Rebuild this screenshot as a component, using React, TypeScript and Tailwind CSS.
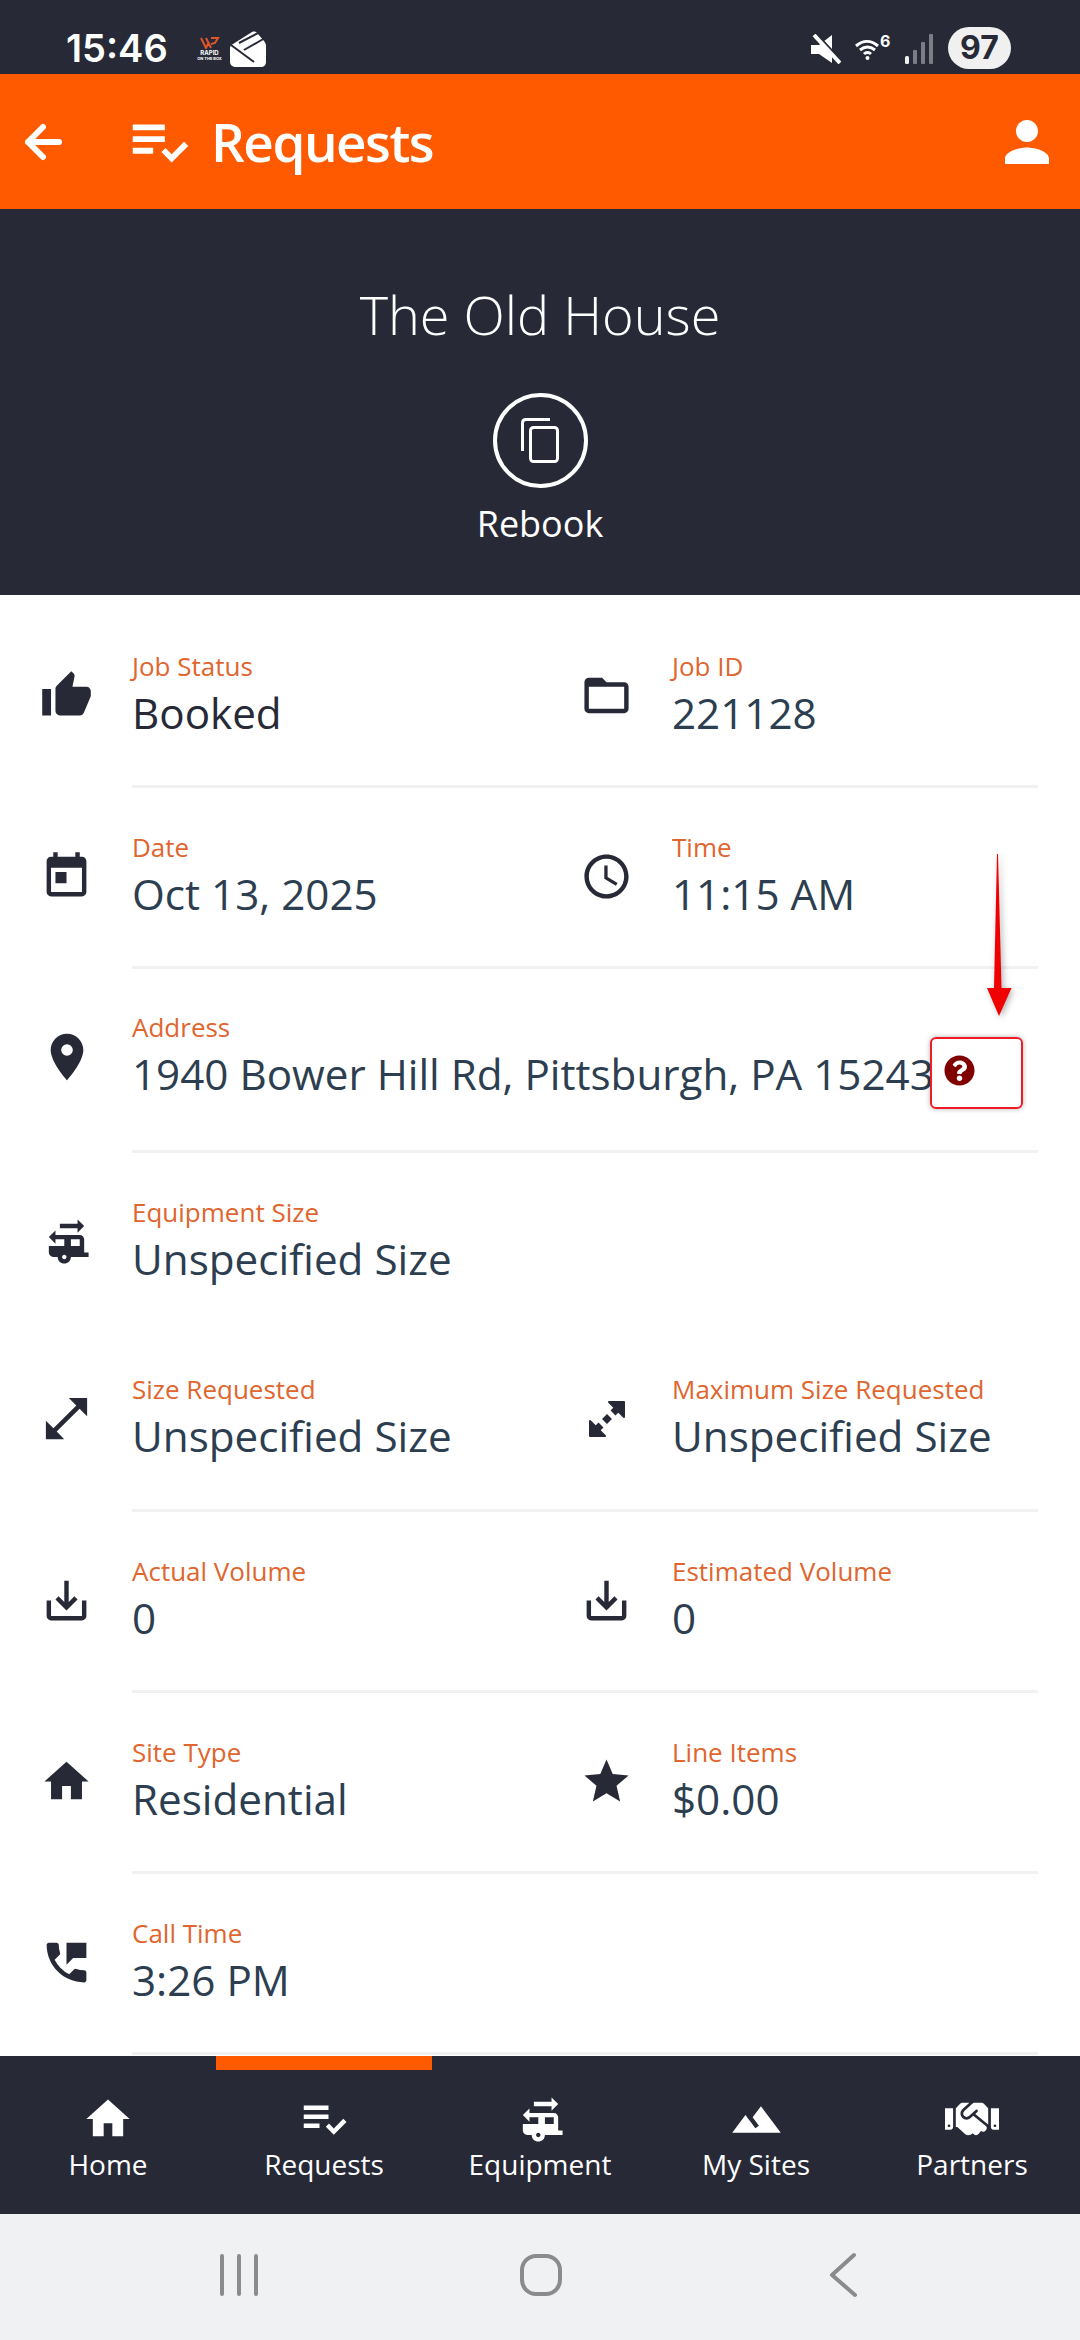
import type { ReactNode } from "react";
import { FaHandshake, FaQuestionCircle } from "react-icons/fa";
import {
  MdAccessTime,
  MdFolderOpen,
  MdHome,
  MdOpenInFull,
  MdPermPhoneMsg,
  MdPerson,
  MdPlace,
  MdPlaylistAddCheck,
  MdRvHookup,
  MdSaveAlt,
  MdStar,
  MdTerrain,
  MdThumbUp,
  MdToday,
} from "react-icons/md";

function MaxSizeIcon() {
  return (
    <svg width="38" height="38" viewBox="0 0 38 38" fill="#272937" stroke="#272937">
      <path d="M21 2h15v15z" strokeWidth="2" strokeLinejoin="round" />
      <path d="M17 36H2V21z" strokeWidth="2" strokeLinejoin="round" />
      <path d="M31 7l-6 6M21.500 16.500l-5 5M13 25l-6 6" strokeWidth="7" />
    </svg>
  );
}

function Field({ icon, label, value, dark }: { icon: ReactNode; label: string; value: ReactNode; dark?: boolean }) {
  return (
    <div className="flex items-center">
      <div className="w-[132px] pl-[1px] flex justify-center text-[#272937]">{icon}</div>
      <div>
        <div className="text-[26px] leading-[34px] mb-[2px] text-[#e0652e]">{label}</div>
        <div className={`text-[42.200px] leading-[56px] pb-[1px] whitespace-nowrap ${dark ? "text-[#272937]" : "text-[#2c3e50]"}`}>
          {value}
        </div>
      </div>
    </div>
  );
}

function Sep() {
  return <div className="h-[3px] ml-[132px] mr-[42px] bg-[#f1f1f1]" />;
}

function StatusBar() {
  return (
    <div className="h-[74px] bg-[#272937] flex items-center shrink-0 pl-[66px] pr-[69px] text-white">
      <span className="font-['Inter',sans-serif] font-semibold text-[38px] leading-none mt-[21px] w-[123px]">15:46</span>
      <div className="w-[41px] mt-[24px] flex flex-col items-center">
        <svg width="20" height="12" viewBox="0 0 20 12" fill="none" stroke="#e0562a" strokeWidth="2">
          <path d="M1 1l5 10 3-6M6 1l5 10M11 1h7l-3 5-4 1" />
        </svg>
        <span className="font-['Inter',sans-serif] font-bold text-[6px] leading-[7px]">RAPID</span>
        <span className="font-['Inter',sans-serif] font-bold text-[4px] leading-[5px] whitespace-nowrap">ON THE BOX</span>
      </div>
      <svg className="mt-[24px]" width="36" height="36" viewBox="0 0 36 36">
        <path d="M3 13L22 1c3-1 5 0 6 2l6 7c1 1 2 3 2 5v16c0 3-2 5-5 5H6c-3 0-6-2-6-5V17c0-2 1-3 3-4z" fill="white" />
        <path d="M9 12L28 2M14 19L35 7M1 14l23 17" fill="none" stroke="#272937" strokeWidth="2" />
      </svg>
      <div className="flex-1" />
      <svg className="mt-[24px]" width="30" height="30" viewBox="0 0 30 30" fill="white">
        <path d="M0 11h8L21 1v28L8 20H0z" />
        <path d="M6 1l26 28" stroke="#272937" strokeWidth="3" fill="none" />
        <path d="M3 1l26 28" stroke="white" strokeWidth="4" fill="none" />
      </svg>
      <svg className="ml-[14px] mt-[20px] overflow-visible" width="36" height="26" viewBox="0 0 36 26" fill="none" stroke="white" strokeWidth="3">
        <path d="M1 12c7-6 15-6 22 0M5 16c5-4 10-4 15 0M9 20c2-2 5-2 7 0" />
        <circle cx="12.500" cy="24" r="2" fill="white" stroke="none" />
        <text x="25" y="13" fontSize="16" fontWeight="700" fill="white" stroke="none" fontFamily="Inter, sans-serif">6</text>
      </svg>
      <svg className="ml-[14px] mt-[24px]" width="28" height="30" viewBox="0 0 28 30">
        <rect x="0" y="22" width="4" height="8" rx="1.500" fill="#f0f0f0" />
        <rect x="8" y="16" width="4" height="14" rx="1" fill="#7c7d87" />
        <rect x="16" y="8" width="4" height="22" rx="1" fill="#7c7d87" />
        <rect x="24" y="0" width="4" height="30" rx="1" fill="#7c7d87" />
      </svg>
      <div className="ml-[15px] mt-[22px] w-[63px] h-[42px] rounded-full bg-[#f0f0f0] text-[#272937] font-['Inter',sans-serif] font-bold text-[32px] flex items-center justify-center">
        97
      </div>
    </div>
  );
}

function TabItem({ icon, label, active }: { icon: ReactNode; label: string; active?: boolean }) {
  return (
    <div className="relative flex flex-col items-center pt-[36px]">
      {active && <div className="absolute top-0 inset-x-0 h-[14px] bg-[#ff5a00]" />}
      <div className="h-[54px] flex items-center justify-center">{icon}</div>
      <div className="text-[28px] leading-[36px]">{label}</div>
    </div>
  );
}

export default function App() {
  return (
    <div className="relative w-[1080px] h-[2340px] overflow-hidden flex flex-col bg-white font-['Open_Sans',sans-serif]">
      <StatusBar />

      {/* Orange app bar */}
      <header className="h-[135px] bg-[#ff5a00] shrink-0 flex items-center text-white">
        <div className="w-[132px] pl-[24px]">
          <svg width="38" height="38" viewBox="0 0 38 38" fill="none" stroke="white" strokeWidth="6" strokeLinecap="round" strokeLinejoin="round">
            <path d="M35 19H4M19 4L4 19l15 15" />
          </svg>
        </div>
        <MdPlaylistAddCheck size={70} className="-ml-[8px]" />
        <h1 className="text-[53px] font-semibold tracking-[-1.500px] ml-[17px]">Requests</h1>
        <div className="flex-1" />
        <MdPerson size={66} className="mr-[20px]" />
      </header>

      {/* Job title block */}
      <section className="h-[386px] bg-[#272937] shrink-0 flex flex-col items-center text-white">
        <h2 className="text-[54px] font-light leading-[68px] mt-[71px]">The Old House</h2>
        <div className="w-[95px] h-[95px] mt-[45px] rounded-full border-[4px] border-white flex items-center justify-center">
          <svg width="38" height="45" viewBox="0 0 38 45" fill="none" stroke="white" strokeWidth="3">
            <path d="M1.500 33V5c0-2 1-3.500 3.500-3.500h24" />
            <rect x="9.500" y="9.500" width="27" height="34" rx="3" />
          </svg>
        </div>
        <div className="text-[36px] leading-[48px] mt-[12px]">Rebook</div>
      </section>

      {/* Details */}
      <main className="flex-1 overflow-hidden">
        <div className="grid grid-cols-2 pt-[54px] pb-[43px]">
          <Field icon={<MdThumbUp size={53} />} label="Job Status" value="Booked" dark />
          <Field icon={<MdFolderOpen size={53} />} label="Job ID" value="221128" />
        </div>
        <Sep />
        <div className="grid grid-cols-2 pt-[42px] pb-[43px]">
          <Field icon={<MdToday size={53} />} label="Date" value="Oct 13, 2025" />
          <Field icon={<MdAccessTime size={53} />} label="Time" value="11:15 AM" />
        </div>
        <Sep />
        <div className="pt-[41px] pb-[47px]">
          <Field
            icon={<MdPlace size={56} />}
            label="Address"
            value={
              <span className="flex items-center">
                1940 Bower Hill Rd, Pittsburgh, PA 15243
                <FaQuestionCircle size={31} className="ml-[10px] -mt-[8px] text-[#800000]" />
              </span>
            }
          />
        </div>
        <Sep />
        <div className="pt-[42px] pb-[42px]">
          <Field icon={<MdRvHookup size={53} />} label="Equipment Size" value="Unspecified Size" />
        </div>
        <div className="grid grid-cols-2 pt-[42px] pb-[44px]">
          <Field icon={<MdOpenInFull size={55} />} label="Size Requested" value="Unspecified Size" />
          <Field icon={<MaxSizeIcon />} label="Maximum Size Requested" value="Unspecified Size" />
        </div>
        <Sep />
        <div className="grid grid-cols-2 pt-[42px] pb-[43px]">
          <Field icon={<MdSaveAlt size={53} />} label="Actual Volume" value="0" />
          <Field icon={<MdSaveAlt size={53} />} label="Estimated Volume" value="0" />
        </div>
        <Sep />
        <div className="grid grid-cols-2 pt-[42px] pb-[43px]">
          <Field icon={<MdHome size={53} />} label="Site Type" value="Residential" />
          <Field icon={<MdStar size={53} />} label="Line Items" value="$0.00" />
        </div>
        <Sep />
        <div className="pt-[42px] pb-[43px]">
          <Field icon={<MdPermPhoneMsg size={53} />} label="Call Time" value="3:26 PM" />
        </div>
        <Sep />
      </main>

      {/* Bottom tabs */}
      <nav className="h-[158px] bg-[#272937] shrink-0 grid grid-cols-5 text-white">
        <TabItem icon={<MdHome size={52} />} label="Home" />
        <TabItem icon={<MdPlaylistAddCheck size={54} />} label="Requests" active />
        <TabItem icon={<MdRvHookup size={53} />} label="Equipment" />
        <TabItem icon={<MdTerrain size={53} />} label="My Sites" />
        <TabItem icon={<FaHandshake size={54} />} label="Partners" />
      </nav>

      {/* Android nav */}
      <div className="h-[126px] bg-[#f0f1f3] shrink-0 relative">
        <svg className="absolute left-[216px] top-[38px]" width="44" height="46" viewBox="0 0 44 46" fill="none" stroke="#8b8b8b" strokeWidth="4" strokeLinecap="round">
          <path d="M6 4v38M23 4v38M40 4v38" />
        </svg>
        <svg className="absolute left-[518px] top-[38px]" width="46" height="46" viewBox="0 0 46 46" fill="none" stroke="#8b8b8b" strokeWidth="4">
          <rect x="4" y="4" width="38" height="38" rx="14" />
        </svg>
        <svg className="absolute left-[828px] top-[38px]" width="32" height="46" viewBox="0 0 32 46" fill="none" stroke="#8b8b8b" strokeWidth="4" strokeLinecap="round" strokeLinejoin="round">
          <path d="M26 3L4 23l23 20" />
        </svg>
      </div>

      {/* Red annotation over the address row */}
      <div className="absolute left-[930px] top-[1037px] w-[93px] h-[72px] rounded-[6px] border-2 border-[#ee1c25] shadow-[0_0_5px_rgba(0,0,0,0.3)]" />
      <svg className="absolute left-[985px] top-[852px] drop-shadow-[2px_2px_3px_rgba(0,0,0,0.3)]" width="28" height="166" viewBox="0 0 28 166" fill="#f00000">
        <path d="M12 2l1 0 3.500 134 10 0L14 164 2 136l7 0z" />
      </svg>
    </div>
  );
}
